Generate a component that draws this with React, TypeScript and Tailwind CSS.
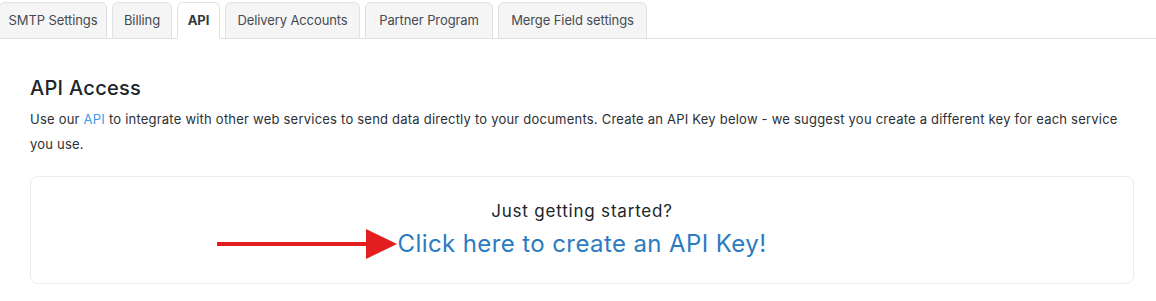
import React from "react";

const tabs = [
  { label: "SMTP Settings", w: "w-[108px]", active: false },
  { label: "Billing", w: "w-[60px]", active: false },
  { label: "API", w: "w-[43px]", active: true },
  { label: "Delivery Accounts", w: "w-[135px]", active: false },
  { label: "Partner Program", w: "w-[128px]", active: false },
  { label: "Merge Field settings", w: "w-[149px]", active: false },
];

export default function App() {
  return (
    <div className="w-[1156px] h-[301px] bg-white overflow-hidden text-[#212529]" style={{ fontFamily: "Inter, 'Open Sans', sans-serif" }}>
      <div className="flex items-end gap-[5px] pt-[2px] ml-[-1px] border-b border-[#dee2e6] h-[39px] w-[1157px]">
        {tabs.map((t) => (
          <div
            key={t.label}
            className={
              "h-[37px] mb-[-1px] flex items-center justify-center rounded-t-[6px] border text-[13px] tracking-[-0.1px] " +
              t.w +
              " " +
              (t.active
                ? "bg-white border-[#dee2e6] border-b-white font-bold text-[#343a40]"
                : "bg-[#f5f5f5] border-[#dee2e6] text-[#444b52]")
            }
          >
            {t.label}
          </div>
        ))}
      </div>
      <div className="pl-[30px] pr-[22px]">
        <h2 className="mt-[35px] text-[20px] leading-[28px] font-medium tracking-[0.3px] text-[#212529]">API Access</h2>
        <p className="mt-[5px] text-[13px] leading-[25px] text-[#2b3035] tracking-[0.22px]">
          Use our <span className="text-[#3d9be9]">API</span> to integrate with other web services to send data directly to your documents. Create an API Key below - we suggest you create a different key for each service you use.
        </p>
        <div className="mt-[19px] h-[108px] rounded-[8px] border border-[#ebebeb] flex flex-col items-center pt-[22px]">
          <div className="text-[17px] leading-[25px] tracking-[0.8px] text-[#212529]">Just getting started?</div>
          <div className="relative mt-[2px]">
            <svg className="absolute left-[-181px] top-[1px]" width="182" height="34" viewBox="0 0 182 34">
              <rect x="0" y="15" width="152" height="4" fill="#e31e1e" />
              <polygon points="149,2 180,17 149,32" fill="#e31e1e" />
            </svg>
            <span className="text-[24px] leading-[36px] tracking-[0.4px] text-[#2b7bc0]">Click here to create an API Key!</span>
          </div>
        </div>
      </div>
    </div>
  );
}
